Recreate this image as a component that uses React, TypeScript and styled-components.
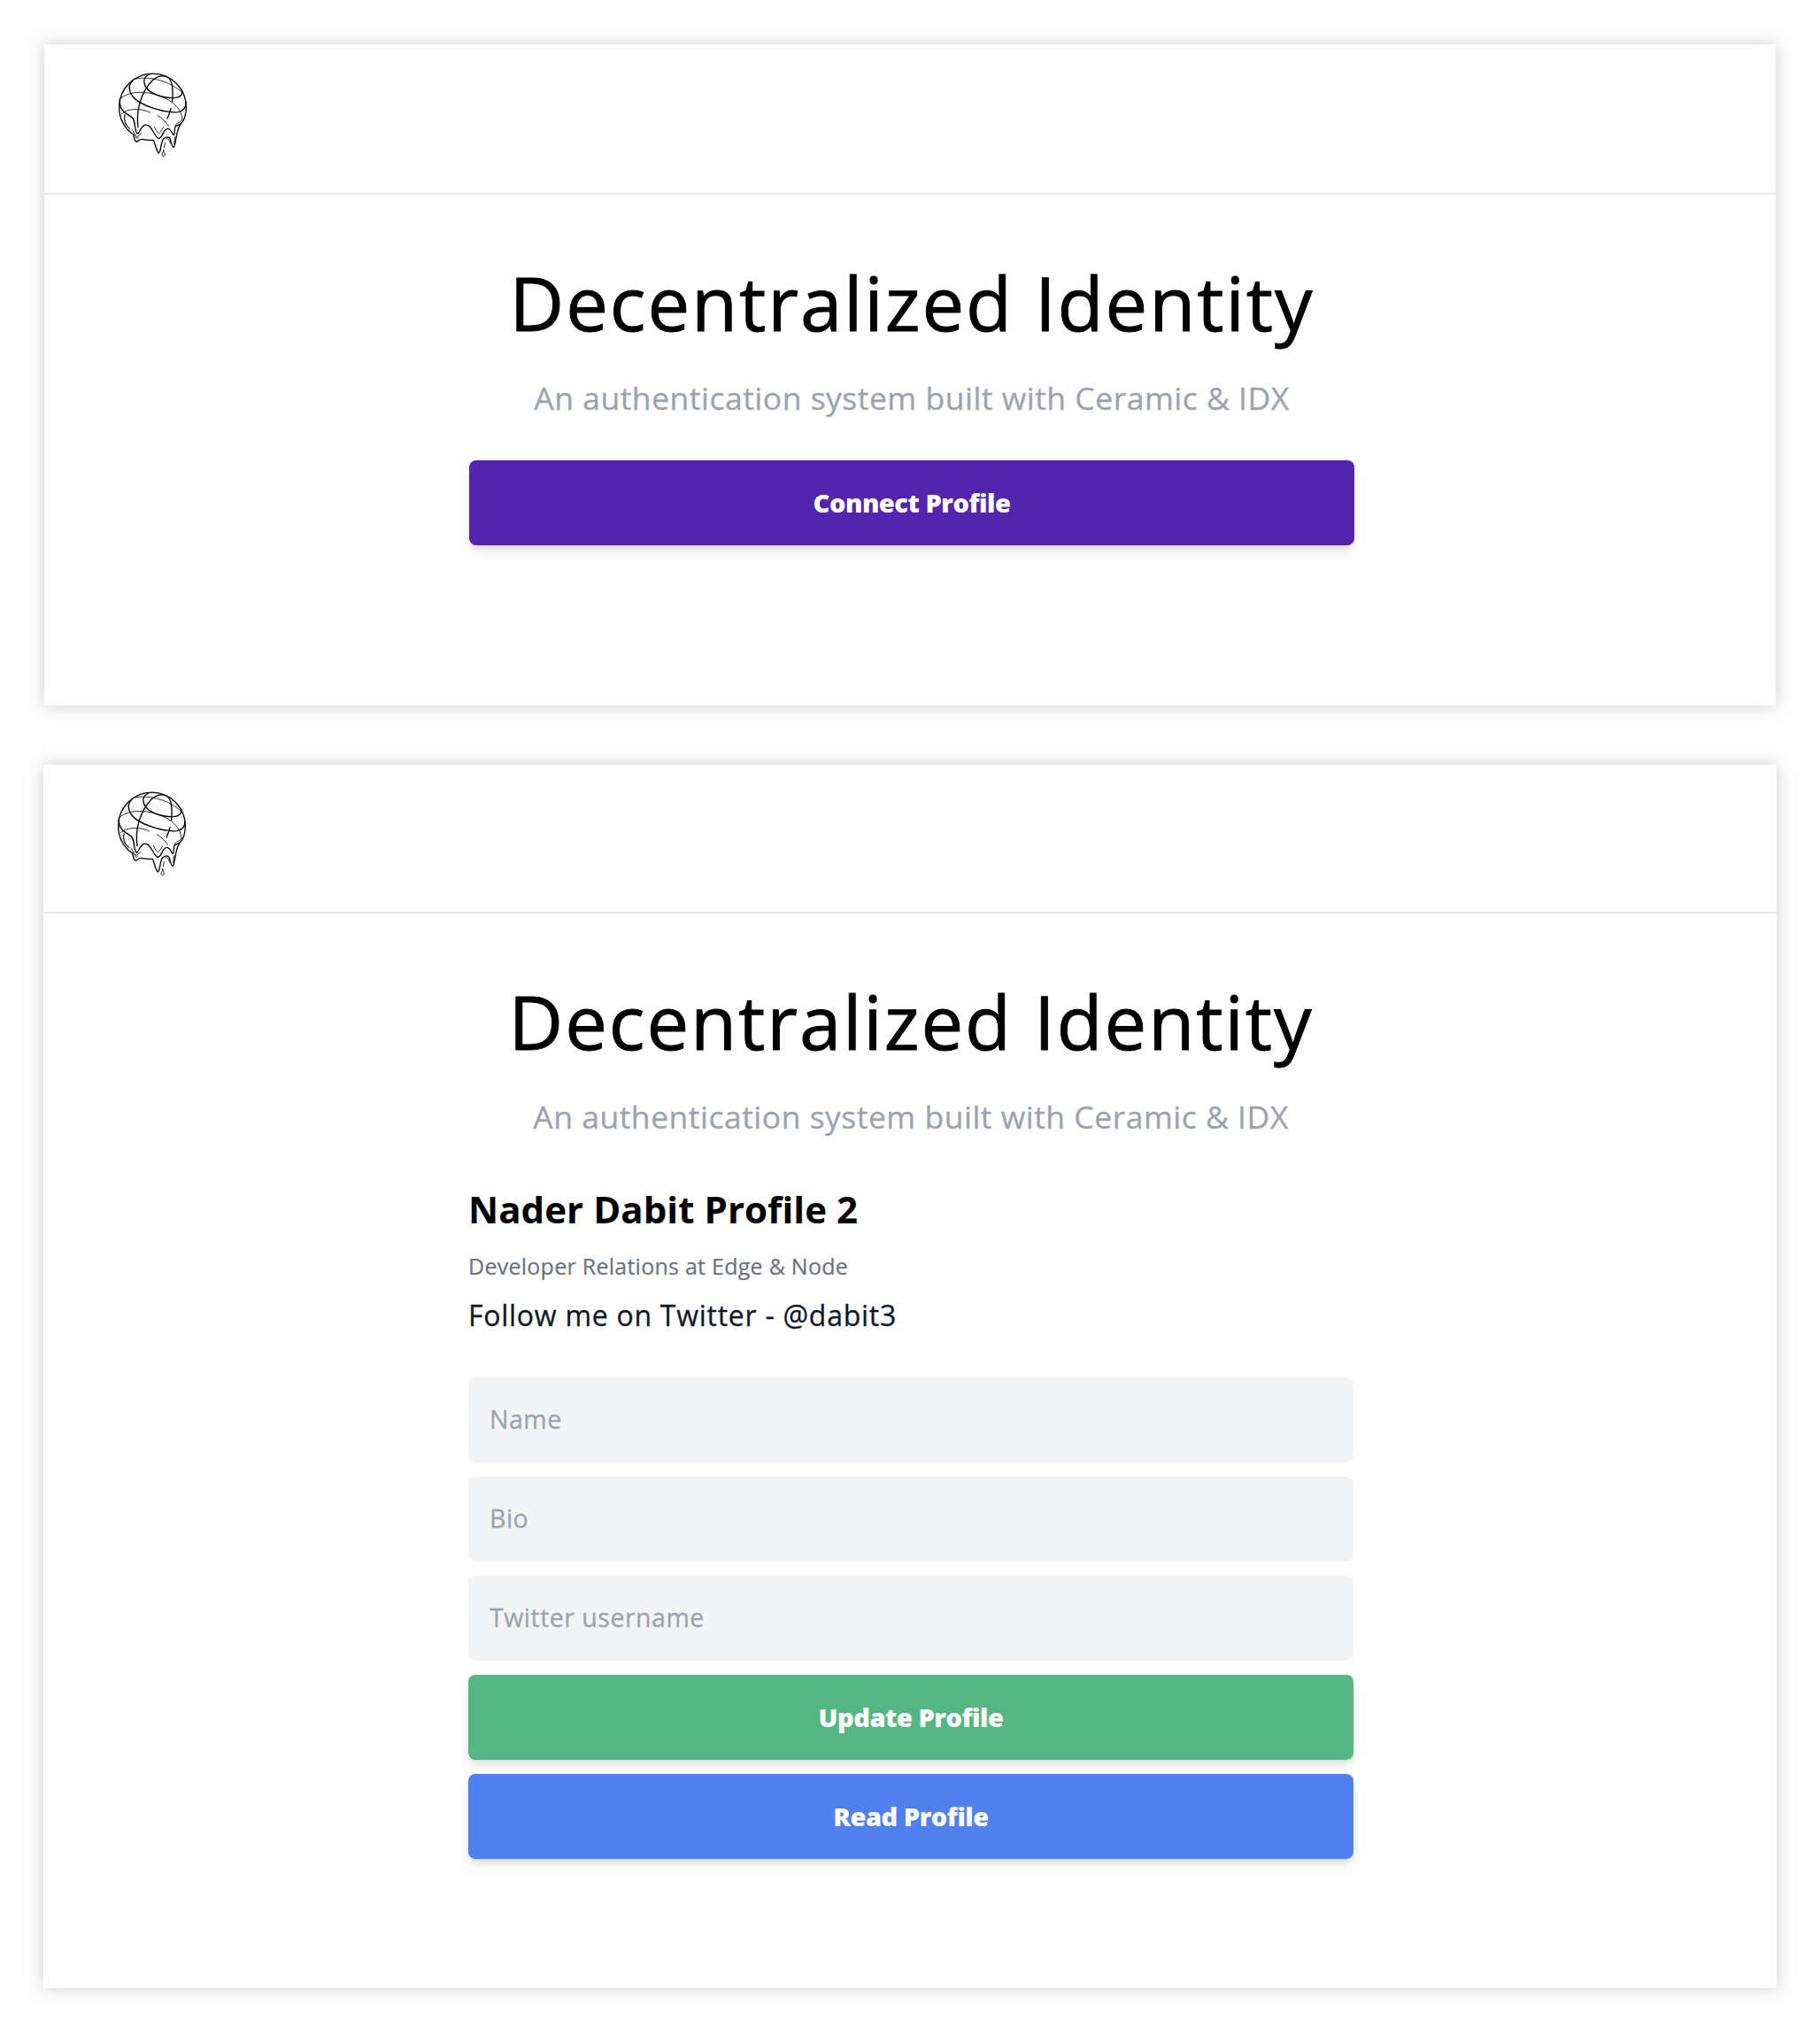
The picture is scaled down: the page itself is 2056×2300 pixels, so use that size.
import React from "react";
import styled, { createGlobalStyle } from "styled-components";

const GlobalStyle = createGlobalStyle`
  *, *::before, *::after { box-sizing: border-box; }
  body {
    margin: 0;
    background: #fefefe;
    font-family: "Open Sans", "Noto Sans", sans-serif;
    color: #000;
  }
  h1, h2, p { margin: 0; }
`;

const Page = styled.main`
  display: flex;
  flex-direction: column;
  align-items: flex-start;
  gap: 67px;
  height: 2300px;
  padding-top: 50px;
  overflow: hidden;
`;

const Window = styled.section<{ $left: number; $width: number; $height: number }>`
  flex: none;
  width: ${(p) => p.$width}px;
  height: ${(p) => p.$height}px;
  margin-left: ${(p) => p.$left}px;
  background: #fefefe;
  box-shadow: 0 0 17px rgba(0, 0, 0, 0.2);
`;

const Header = styled.header<{ $height: number; $top: number }>`
  display: flex;
  align-items: flex-start;
  height: ${(p) => p.$height}px;
  padding: ${(p) => p.$top}px 0 0 70px;
  border-bottom: 2px solid #e5e7eb;
`;

const LogoSvg = styled.svg`
  width: 105px;
  height: 120px;
  fill: none;
  stroke: #000;
  stroke-linecap: round;
  stroke-linejoin: round;
`;

const Content = styled.div`
  display: flex;
  flex-direction: column;
  width: 1000px;
  margin-left: 480px;
  padding-top: 61px;
`;

const Title = styled.h1`
  font-size: 85px;
  line-height: 120px;
  font-weight: 450;
  letter-spacing: 1.9px;
  -webkit-text-stroke: 0.9px #000;
  text-align: center;
  white-space: nowrap;
`;

const Subtitle = styled.p`
  margin-top: 23px;
  font-size: 35.5px;
  line-height: 50px;
  font-weight: 450;
  letter-spacing: 0.5px;
  -webkit-text-stroke: 0.3px #9ca3af;
  text-align: center;
  white-space: nowrap;
  color: #9ca3af;
`;

const ProfileName = styled.h2`
  margin-top: 50px;
  font-size: 42px;
  line-height: 60px;
  font-weight: 700;
  letter-spacing: 0.05px;
`;

const ProfileBio = styled.p`
  margin-top: 16px;
  font-size: 25px;
  line-height: 36px;
  letter-spacing: 0.26px;
  -webkit-text-stroke: 0.2px #6b7280;
  color: #6b7280;
`;

const ProfileTwitter = styled.p`
  margin-top: 16px;
  font-size: 32px;
  line-height: 44px;
  letter-spacing: 0.73px;
  -webkit-text-stroke: 0.3px #111827;
  color: #111827;
`;

const Stack = styled.div<{ $top: number }>`
  display: flex;
  flex-direction: column;
  gap: 16px;
  margin-top: ${(p) => p.$top}px;
`;

const Field = styled.input`
  height: 96px;
  padding: 0 24px 2px;
  border: 0;
  border-radius: 8px;
  background: #f3f4f6;
  font: 400 28.5px "Open Sans", "Noto Sans", sans-serif;
  letter-spacing: 0.5px;
  &::placeholder {
    color: #9ca3af;
    opacity: 1;
    -webkit-text-stroke: 0.3px #9ca3af;
  }
`;

const Button = styled.button<{ $color: string }>`
  height: 96px;
  padding: 0 0 2px;
  border: 0;
  border-radius: 8px;
  background: ${(p) => p.$color};
  box-shadow: 0 8px 12px -2px rgba(0, 0, 0, 0.1), 0 4px 8px -2px rgba(0, 0, 0, 0.06);
  color: #fff;
  font: 800 29px "Open Sans", "Noto Sans", sans-serif;
  letter-spacing: -0.45px;
`;

function Logo() {
  return (
    <LogoSvg viewBox="0 0 315 360">
      <g strokeWidth="4">
        <path d="M92 246 C58 222 44 188 44 153 A113.5 113.5 0 0 1 271 153 C271 176 265 198 252 211" />
        <path d="M108 221 C101 172 113 108 156 63 C177 43 200 44 213 55 C225 68 227 98 224 134" />
        <path d="M146 42 C121 53 123 80 150 101 C180 121 228 126 247 118 C255 113 259 106 257 97" />
        <path d="M91 62 C76 76 75 96 90 117 C112 146 194 174 243 170 C264 166 271 155 270 136" />
        <path d="M46 126 C44 148 50 160 61 170 L86 187 C95 194 96 204 98 221 C100 235 104 243 107 243 C113 241 115 221 130 214 C154 208 161 251 177 259 C192 259 192 226 209 226 C220 226 223 245 229 248 C233 241 230 225 235 218 L250 211" />
        <path d="M92 244 C94 257 97 271 103 270 C109 269 112 261 122 262 C136 265 147 265 160 265 C165 273 170 303 178 309 C188 302 183 269 196 259 C204 253 213 252 217 262 C220 275 223 290 229 289 C237 277 236 235 250 214" />
        <path d="M219 157 L214 175 L207 192" />
      </g>
      <path strokeWidth="3.4" d="M63 179 C58 202 67 216 80 226" />
      <g strokeWidth="2.4">
        <path d="M98 58 C150 45 222 68 257 104" />
        <path d="M48 124 C84 91 169 98 222 136 C245 153 257 173 258 197" />
        <path d="M52 176 C72 157 115 155 149 171" />
        <path d="M175 182 C190 191 202 203 211 217" />
        <path d="M163 220 L172 236 Q178 246 184 237 L194 221" />
        <path d="M87 228 L99 248 Q105 258 111 249 L120 241" />
        <path d="M235 218 C232 207 245 211 258 196" />
        <path d="M98 248 C99 258 105 262 110 257" />
        <path d="M203 260 C212 259 215 266 217 276" />
        <path d="M199 274 L196 290" />
        <path d="M233 254 L230 278" />
        <path strokeWidth="2.6" d="M194 299 C194 306 189 310 189 315 C189 322 199 322 199 315 C199 310 195 306 194 299Z" />
      </g>
    </LogoSvg>
  );
}

function Intro() {
  return (
    <>
      <Title>Decentralized Identity</Title>
      <Subtitle>An authentication system built with Ceramic &amp; IDX</Subtitle>
    </>
  );
}

export default function App() {
  return (
    <>
      <GlobalStyle />
      <Page>
        <Window $left={50} $width={1956} $height={747}>
          <Header $height={170} $top={20}>
            <Logo />
          </Header>
          <Content>
            <Intro />
            <Stack $top={46}>
              <Button $color="#5324ad">Connect Profile</Button>
            </Stack>
          </Content>
        </Window>
        <Window $left={49} $width={1958} $height={1382}>
          <Header $height={168} $top={18}>
            <Logo />
          </Header>
          <Content>
            <Intro />
            <ProfileName>Nader Dabit Profile 2</ProfileName>
            <ProfileBio>Developer Relations at Edge &amp; Node</ProfileBio>
            <ProfileTwitter>Follow me on Twitter - @dabit3</ProfileTwitter>
            <Stack $top={48}>
              <Field placeholder="Name" />
              <Field placeholder="Bio" />
              <Field placeholder="Twitter username" />
              <Button $color="#55b685">Update Profile</Button>
              <Button $color="#4e80ee">Read Profile</Button>
            </Stack>
          </Content>
        </Window>
      </Page>
    </>
  );
}
